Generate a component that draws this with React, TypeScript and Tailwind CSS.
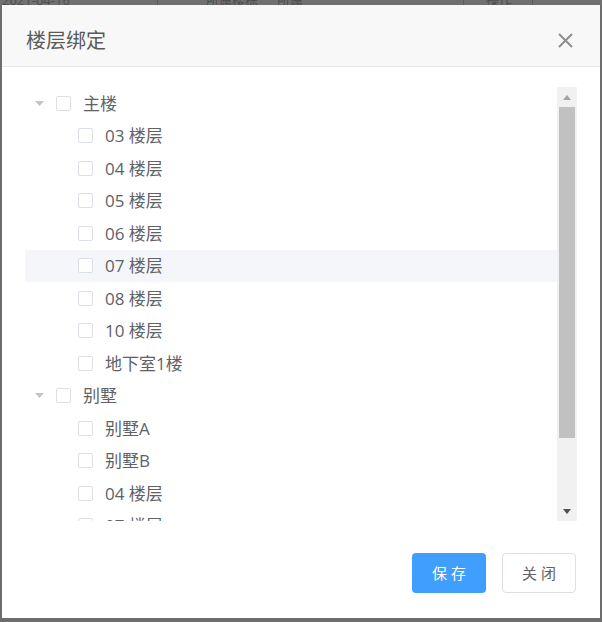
import React from 'react';

type Row = { level: 1 | 2; label: string; hover?: boolean };

const rows: Row[] = [
  { level: 1, label: '主楼' },
  { level: 2, label: '03 楼层' },
  { level: 2, label: '04 楼层' },
  { level: 2, label: '05 楼层' },
  { level: 2, label: '06 楼层' },
  { level: 2, label: '07 楼层', hover: true },
  { level: 2, label: '08 楼层' },
  { level: 2, label: '10 楼层' },
  { level: 2, label: '地下室1楼' },
  { level: 1, label: '别墅' },
  { level: 2, label: '别墅A' },
  { level: 2, label: '别墅B' },
  { level: 2, label: '04 楼层' },
  { level: 2, label: '07 楼层' },
  { level: 2, label: '08 楼层' },
];

function Checkbox() {
  return <span className="block w-[15px] h-[15px] border border-[#dcdfe6] rounded-[2px] bg-white shrink-0" />;
}

function Caret() {
  return (
    <svg width="9" height="5" viewBox="0 0 9 5" className="shrink-0">
      <polygon points="0,0 9,0 4.5,5" fill="#c0c4cc" />
    </svg>
  );
}

export default function App() {
  return (
    <div
      className="w-[602px] h-[622px] bg-[#6d6d6d] overflow-hidden flex flex-col"
      style={{ fontFamily: '"Open Sans", "Noto Sans CJK SC", sans-serif' }}
    >
      <div className="h-[5px] relative overflow-hidden shrink-0 bg-[#707070]">
        <div className="absolute left-0 top-[-9px] flex items-center text-[13px] text-[#4e4e4e] whitespace-nowrap">
          <span className="w-[157px] pl-[2px]">2021-04-16</span>
          <span className="w-[1px] h-[20px] bg-[#5c5c5c]" />
          <span className="w-[93px] pl-[48px]">所属楼栋</span>
          <span className="w-[1px] h-[20px] bg-[#5c5c5c]" />
          <span className="w-[211px] pl-[25px]">所属</span>
          <span className="w-[1px] h-[20px] bg-[#5c5c5c]" />
          <span className="w-[68px] pl-[22px]">操作</span>
          <span className="w-[1px] h-[20px] bg-[#5c5c5c]" />
        </div>
      </div>
      <div className="ml-[2px] w-[598px] h-[613px] bg-white flex flex-col">
        <div className="h-[62px] bg-[#f8f8f8] border-b border-[#ebebeb] flex items-center justify-between pt-[10px] pl-[24px] pr-[27px] shrink-0">
          <span className="text-[20px] text-[#5a5a5a] leading-none">楼层绑定</span>
          <svg width="15" height="15" viewBox="0 0 15 15">
            <path d="M1 1 L14 14 M14 1 L1 14" stroke="#8e8e8e" strokeWidth="2" />
          </svg>
        </div>
        <div className="pt-[20px] pl-[23px] pr-[23px] flex">
          <div className="w-[532px] h-[434px] overflow-hidden">
            {rows.map((r, i) => (
              <div
                key={i}
                className={`h-[32.5px] flex items-center text-[17px] text-[#606266] whitespace-nowrap ${r.hover ? 'bg-[#f5f6fa]' : ''}`}
              >
                {r.level === 1 ? (
                  <div className="flex items-center pl-[10px]">
                    <Caret />
                    <span className="ml-[12px]"><Checkbox /></span>
                    <span className="ml-[12px]">{r.label}</span>
                  </div>
                ) : (
                  <div className="flex items-center pl-[53px]">
                    <Checkbox />
                    <span className="ml-[12px]">{r.label}</span>
                  </div>
                )}
              </div>
            ))}
          </div>
          <div className="w-[20px] h-[434px] bg-[#f1f1f1] flex flex-col shrink-0">
            <div className="h-[20px] flex items-center justify-center">
              <svg width="8" height="5" viewBox="0 0 8 5">
                <polygon points="4,0 8,5 0,5" fill="#a3a3a3" />
              </svg>
            </div>
            <div className="h-[331px] mx-[2px] bg-[#c1c1c1]" />
            <div className="flex-1" />
            <div className="h-[20px] flex items-center justify-center">
              <svg width="8" height="5" viewBox="0 0 8 5">
                <polygon points="0,0 8,0 4,5" fill="#505050" />
              </svg>
            </div>
          </div>
        </div>
        <div className="mt-[32px] flex justify-end gap-[16px] pr-[24px]">
          <button className="w-[74px] h-[40px] bg-[#409eff] text-white text-[15px] tracking-[4px] pl-[4px] rounded-[4px]">保存</button>
          <button className="w-[74px] h-[40px] bg-white border border-[#dcdfe6] text-[#606266] text-[15px] tracking-[4px] pl-[4px] rounded-[4px]">关闭</button>
        </div>
      </div>
    </div>
  );
}
